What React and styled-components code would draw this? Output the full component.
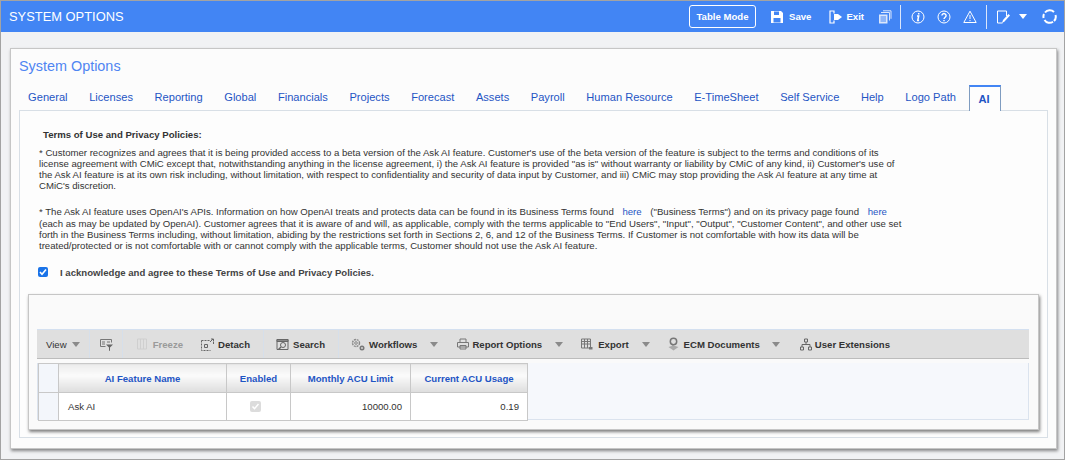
import React from 'react';
import styled, { createGlobalStyle } from 'styled-components';

const GlobalStyle = createGlobalStyle`
  html, body {
    margin: 0;
    padding: 0;
    background: #f1f2f4;
    font-family: "Liberation Sans", Arial, sans-serif;
  }
`;

const Page = styled.div`
  width: 1065px;
  height: 460px;
  box-sizing: border-box;
  border: 1px solid #a3a3a3;
  background: #f1f2f4;
  overflow: hidden;
`;

const TopBar = styled.header`
  height: 31px;
  background: #4285f4;
  display: flex;
  align-items: center;
  padding-left: 8px;
  padding-right: 7px;
  color: #fff;
`;

const AppTitle = styled.h1`
  margin: 0;
  font-size: 12.9px;
  font-weight: 400;
  flex: 1;
`;

const ModeButton = styled.button`
  width: 67px;
  height: 23px;
  padding: 0;
  background: transparent;
  border: 1px solid #fff;
  border-radius: 3px;
  color: #fff;
  font: bold 9.6px "Liberation Sans", Arial, sans-serif;
  margin-right: 14px;
`;

const BarAction = styled.span`
  display: flex;
  align-items: center;
  gap: ${p => p.$gap || 5}px;
  margin-left: ${p => p.$ml || 0}px;
  margin-right: ${p => p.$mr || 0}px;
  font-size: 9.6px;
  font-weight: 700;
`;

const BarDivider = styled.span`
  width: 1px;
  height: 24px;
  background: #dbe6fb;
  margin-right: ${p => p.$mr}px;
`;

const Panel = styled.main`
  margin: 16px 0 0 9px;
  width: 1047px;
  height: 401px;
  box-sizing: border-box;
  background: #fcfcfc;
  border: 1px solid #c6c6c6;
  box-shadow: 1px 2px 3px rgba(0, 0, 0, 0.45);
  padding: 9px 8px 0 8px;
`;

const PanelTitle = styled.h2`
  margin: 0;
  height: 27px;
  line-height: 17px;
  color: #4f85f2;
  font-size: 14.4px;
  font-weight: 400;
`;

const TabRow = styled.nav`
  display: flex;
  height: 25px;
  position: relative;
  z-index: 1;
`;

const Tab = styled.a`
  box-sizing: border-box;
  height: ${p => (p.$active ? 26 : 25)}px;
  padding: 5px 12.5px 0 9.1px;
  font-size: 11.1px;
  line-height: 14px;
  color: #1f55c4;
  white-space: nowrap;
  ${p => p.$active && `
    margin-left: 1px;
    padding: 5px 10px 0 8px;
    font-weight: 700;
    background: #fdfdfd;
    border: 1px solid #7f9cc0;
    border-top: 2px solid #4285f4;
    border-bottom: none;
  `}
`;

const TabBody = styled.section`
  box-sizing: border-box;
  height: 328px;
  width: 1029px;
  background: #fdfdfd;
  border: 1px solid #d8dfe6;
  padding: 18px 0 0 8px;
`;

const TermsHeading = styled.div`
  margin: 0 0 6px 15px;
  font-size: 9.6px;
  line-height: 12px;
  font-weight: 700;
  color: #333;
`;

const TermsText = styled.p`
  margin: 0 0 14px 11px;
  font-size: 9.6px;
  line-height: 11px;
  color: #333;
  white-space: nowrap;
`;

const HereLink = styled.a`
  display: inline-block;
  line-height: 13px;
  color: #1f55c4;
  margin: 0 6px;
`;

const AgreeRow = styled.label`
  display: flex;
  align-items: center;
  height: 12px;
  margin: 15px 0 0 10px;
  font-size: 9.6px;
  font-weight: 700;
  color: #444;
`;

const AgreeBox = styled.span`
  box-sizing: border-box;
  width: 10px;
  height: 10px;
  border-radius: 2px;
  background: #1a73e8;
  margin-right: 12px;
  display: flex;
  align-items: center;
  justify-content: center;
`;

const GridCard = styled.div`
  box-sizing: border-box;
  width: 1011px;
  height: 136px;
  margin-top: 16px;
  background: #fafafa;
  border: 1px solid #c6c6c6;
  box-shadow: 1px 2px 3px rgba(0, 0, 0, 0.5);
  padding: 34px 9px 0 8px;
`;

const GridToolbar = styled.div`
  box-sizing: border-box;
  display: flex;
  align-items: center;
  height: 30px;
  background: #dfdfdf;
  border-top: 1px solid #d4e0f0;
  border-bottom: 1px solid #bcbcbc;
  color: #333;
`;

const ToolItem = styled.span`
  display: flex;
  align-items: center;
  white-space: nowrap;
  gap: ${p => p.$gap || 5}px;
  margin-left: ${p => p.$ml || 0}px;
  color: ${p => (p.$muted ? '#9a9a9a' : '#333')};
  font-weight: ${p => (p.$plain ? 400 : 700)};
  font-size: 9.6px;
`;

const ToolDivider = styled.span`
  width: 1px;
  height: 28px;
  background: #d6dfea;
  margin-left: ${p => p.$ml}px;
`;

const Caret = styled.span`
  width: 0;
  height: 0;
  border-left: 4px solid transparent;
  border-right: 4px solid transparent;
  border-top: 5px solid ${p => p.$color || '#8a8a8a'};
  margin-left: ${p => p.$ml || 0}px;
`;

const TableArea = styled.div`
  box-sizing: border-box;
  margin-top: 4px;
  height: 57px;
  background: #f6f8fc;
  border: 1px solid #dbe3ee;
  border-top: none;
`;

const GridTable = styled.table`
  border-collapse: collapse;
  table-layout: fixed;
  width: 489px;
  font-size: 9.6px;
`;

const CornerCell = styled.th`
  width: 19px;
  height: 28px;
  padding: 0;
  background: #f3f6fb;
  border: 1px solid #c8c8c8;
`;

const HeadCell = styled.th`
  width: ${p => p.$w}px;
  height: 28px;
  padding: 0;
  font-weight: 700;
  color: #1f55c4;
  text-align: center;
  white-space: nowrap;
  background: linear-gradient(#ececec 0%, #fbfbfb 40%, #dddddd 100%);
  border: 1px solid #c8c8c8;
`;

const RowHead = styled.td`
  padding: 0;
  height: 27px;
  background: #f3f6fb;
  border: 1px solid #c8c8c8;
`;

const Cell = styled.td`
  padding: 0 ${p => (p.$align === 'right' ? '8px' : '9px')};
  background: #fff;
  color: #333;
  font-size: 9.6px;
  text-align: ${p => p.$align || 'left'};
  border: 1px solid #c8c8c8;
`;

const DisabledCheck = styled.span`
  display: inline-flex;
  align-items: center;
  justify-content: center;
  vertical-align: middle;
  width: 11px;
  height: 11px;
  margin-right: 6px;
  border-radius: 2px;
  background: #dcdcdc;
`;

const Ico = ({ w = 14, h = 14, children, color = 'currentColor', sw = 1 }) => (
  <svg width={w} height={h} viewBox={`0 0 ${w} ${h}`} fill="none" stroke={color} strokeWidth={sw}>
    {children}
  </svg>
);

const tabs = ['General', 'Licenses', 'Reporting', 'Global', 'Financials', 'Projects', 'Forecast', 'Assets', 'Payroll', 'Human Resource', 'E-TimeSheet', 'Self Service', 'Help', 'Logo Path'];

export default function App() {
  return (
    <Page>
      <GlobalStyle />
      <TopBar>
        <AppTitle>SYSTEM OPTIONS</AppTitle>
        <ModeButton>Table Mode</ModeButton>
        <BarAction $mr={18}>
          <Ico>
            <path d="M1 1h10l2 2v10H1z" fill="#fff" stroke="none" />
            <path d="M4 1.5h5v3.5H4zM3.5 8h7v4.5h-7z" fill="#4285f4" stroke="none" />
          </Ico>
          Save
        </BarAction>
        <BarAction $mr={14} $gap={3}>
          <Ico sw={1.2} color="#fff">
            <path d="M5 3.5V1H1v12h4v-2.5" />
            <path d="M5 4h4l4 3-4 3H5z" fill="#fff" stroke="none" />
          </Ico>
          Exit
        </BarAction>
        <BarAction $mr={8}>
          <Ico color="#dbe6fb">
            <path d="M1 4.500h8.500v9H1z" fill="#dbe6fb" stroke="none" />
            <path d="M2.500 7h5.500M2.500 9h5.500M2.500 11h5.500" stroke="#4285f4" />
            <path d="M3 2.500h8.500v8M5 .8h8v8" />
          </Ico>
        </BarAction>
        <BarDivider $mr={10} />
        <BarAction $mr={12}>
          <Ico>
            <circle cx="7" cy="7" r="6" />
            <path d="M7.700 3v1.500M6 6h1.700l-1 4.600h1.400" strokeWidth="1.500" />
          </Ico>
        </BarAction>
        <BarAction $mr={12}>
          <Ico>
            <circle cx="7" cy="7" r="6" />
            <path d="M4.900 5.500a2.100 2 0 1 1 3.300 1.700c-.8.600-1.200 1-1.200 1.800M7 10v1.300" strokeWidth="1.400" />
          </Ico>
        </BarAction>
        <BarAction $mr={9}>
          <Ico>
            <path d="M7 1.200l6.200 11.300H.8z" />
            <path d="M7 5v4M7 10v1.200" />
          </Ico>
        </BarAction>
        <BarDivider $mr={9} />
        <BarAction $mr={9}>
          <Ico>
            <path d="M1.500 1h9v5M1.500 1v12h5" />
            <path d="M6 13l1-3 5.500-6 1.500 1.500-5.500 6z" fill="#fff" stroke="none" />
          </Ico>
        </BarAction>
        <Caret $color="#fff" />
        <BarAction $ml={15}>
          <Ico sw={2} w={15} h={15}>
            <path d="M3 3.500A6 6 0 0 1 12 3M13.500 6A6 6 0 0 1 12 12M11 12.800A6 6 0 0 1 2.500 11M1.600 9A6 6 0 0 1 2 5" />
          </Ico>
        </BarAction>
      </TopBar>

      <Panel>
        <PanelTitle>System Options</PanelTitle>
        <TabRow>
          {tabs.map(t => <Tab key={t}>{t}</Tab>)}
          <Tab $active>AI</Tab>
        </TabRow>
        <TabBody>
          <TermsHeading>Terms of Use and Privacy Policies:</TermsHeading>
          <TermsText>
            * Customer recognizes and agrees that it is being provided access to a beta version of the Ask AI feature. Customer's use of the beta version of the feature is subject to the terms and conditions of its<br />
            license agreement with CMiC except that, notwithstanding anything in the license agreement, i) the Ask AI feature is provided "as is" without warranty or liability by CMiC of any kind, ii) Customer's use of<br />
            the Ask AI feature is at its own risk including, without limitation, with respect to confidentiality and security of data input by Customer, and iii) CMiC may stop providing the Ask AI feature at any time at<br />
            CMiC's discretion.
          </TermsText>
          <TermsText>
            * The Ask AI feature uses OpenAI's APIs. Information on how OpenAI treats and protects data can be found in its Business Terms found <HereLink>here</HereLink> ("Business Terms") and on its privacy page found <HereLink>here</HereLink><br />
            (each as may be updated by OpenAI). Customer agrees that it is aware of and will, as applicable, comply with the terms applicable to "End Users", "Input", "Output", "Customer Content", and other use set<br />
            forth in the Business Terms including, without limitation, abiding by the restrictions set forth in Sections 2, 6, and 12 of the Business Terms. If Customer is not comfortable with how its data will be<br />
            treated/protected or is not comfortable with or cannot comply with the applicable terms, Customer should not use the Ask AI feature.
          </TermsText>
          <AgreeRow>
            <AgreeBox>
              <Ico w={8} h={8} sw={1.6} color="#fff"><path d="M1 4l2 2.200L7 1.500" /></Ico>
            </AgreeBox>
            I acknowledge and agree to these Terms of Use and Privacy Policies.
          </AgreeRow>

          <GridCard>
            <GridToolbar>
              <ToolItem $ml={9} $plain>View <Caret /></ToolItem>
              <ToolDivider $ml={9} />
              <ToolItem $ml={10}>
                <Ico w={13} h={13} color="#777">
                  <path d="M.5 1.500h11v3M.5 1.500v7h5M2 4h3M2 6h3M7 4h3" />
                  <path d="M6 6.500h7l-3 3V13l-1-.5V9.500z" fill="#666" stroke="none" />
                </Ico>
              </ToolItem>
              <ToolDivider $ml={9} />
              <ToolItem $ml={14} $muted $gap={6}>
                <Ico w={10} h={12} color="#cfcfcf">
                  <path d="M.5 1v10M3.500 1v10M6.500 1v10M9.500 1v10M.5 1h9M.5 11h9" />
                </Ico>
                Freeze
              </ToolItem>
              <ToolItem $ml={18} $gap={4}>
                <Ico w={13} h={13} color="#666">
                  <path d="M.5 2.500v10h9M.5 2.500h8M12.500 4v3" strokeDasharray="2 1" />
                  <path d="M3.500 6.500h3v3h-3zM9 4l3-3M10 1h2.500v2.500" />
                </Ico>
                Detach
              </ToolItem>
              <ToolDivider $ml={13} />
              <ToolItem $ml={12} $gap={4}>
                <Ico w={13} h={13} color="#666">
                  <path d="M1 1.500h11v10H1z" />
                  <path d="M1 1.500h11v2H1z" fill="#888" />
                  <circle cx="7" cy="7" r="2.500" />
                  <path d="M5 9l-2.500 2.500" strokeWidth="1.500" />
                </Ico>
                Search
              </ToolItem>
              <ToolDivider $ml={13} />
              <ToolItem $ml={12} $gap={4}>
                <Ico w={14} h={13} color="#888">
                  <circle cx="5" cy="5" r="3.500" strokeDasharray="2 .8" strokeWidth="1.400" />
                  <circle cx="5" cy="5" r="1.300" />
                  <circle cx="11" cy="10" r="2.500" fill="#777" stroke="none" />
                  <circle cx="11" cy="10" r=".9" fill="#dfdfdf" stroke="none" />
                </Ico>
                Workflows
              </ToolItem>
              <Caret $ml={13} />
              <ToolItem $ml={19} $gap={3}>
                <Ico w={12} h={12} color="#777">
                  <path d="M3 4V1h6v3M.5 4.500h11V9H.5zM3 7.500h6V11H3z" />
                </Ico>
                Report Options
              </ToolItem>
              <Caret $ml={13} />
              <ToolItem $ml={18}>
                <Ico w={12} h={12} color="#777">
                  <path d="M.5 1h9v9h-9zM.5 3.500h9M.5 6h9M3.500 1v9M6.500 1v9" />
                  <path d="M8 9h3.500v2.500H8z" fill="#777" stroke="none" />
                </Ico>
                Export
              </ToolItem>
              <Caret $ml={13} />
              <ToolItem $ml={17} $gap={4}>
                <Ico w={13} h={14} color="#777">
                  <circle cx="6.500" cy="4.500" r="3.200" strokeWidth="1.500" />
                  <path d="M6 8v2" />
                  <path d="M1.500 10l5-1.500 5 1.500-5 3.500z" fill="#aaa" stroke="none" />
                </Ico>
                ECM Documents
              </ToolItem>
              <Caret $ml={12} />
              <ToolItem $ml={20} $gap={3}>
                <Ico w={12} h={13} color="#666">
                  <path d="M4.500 1h3v3h-3zM.5 9h3v3h-3zM8.500 9h3v3h-3zM6 4v2.500M2 9V6.500h8V9" />
                </Ico>
                User Extensions
              </ToolItem>
            </GridToolbar>
            <TableArea>
              <GridTable>
                <thead>
                  <tr>
                    <CornerCell />
                    <HeadCell $w={167}>AI Feature Name</HeadCell>
                    <HeadCell $w={63}>Enabled</HeadCell>
                    <HeadCell $w={119}>Monthly ACU Limit</HeadCell>
                    <HeadCell $w={116}>Current ACU Usage</HeadCell>
                  </tr>
                </thead>
                <tbody>
                  <tr>
                    <RowHead />
                    <Cell>Ask AI</Cell>
                    <Cell $align="center">
                      <DisabledCheck>
                        <Ico w={9} h={9} sw={1.5} color="#fff"><path d="M1.500 4.500l2 2.200L7.500 2" /></Ico>
                      </DisabledCheck>
                    </Cell>
                    <Cell $align="right">10000.00</Cell>
                    <Cell $align="right">0.19</Cell>
                  </tr>
                </tbody>
              </GridTable>
            </TableArea>
          </GridCard>
        </TabBody>
      </Panel>
    </Page>
  );
}
